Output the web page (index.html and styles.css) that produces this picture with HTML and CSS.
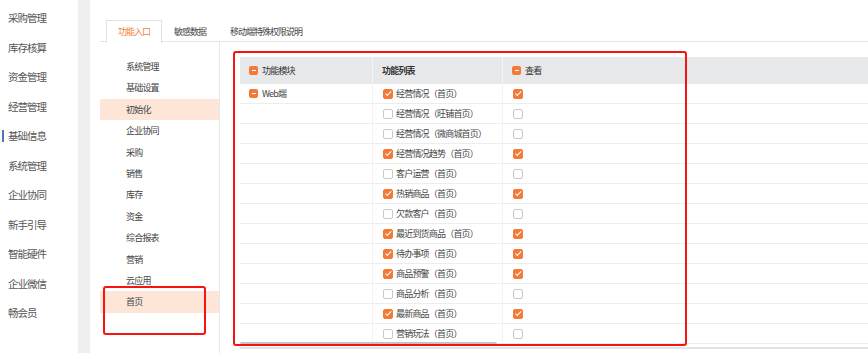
FILE: index.html
```html
<!DOCTYPE html>
<html lang="zh-CN">
<head>
  <meta charset="UTF-8">
  <title>功能入口权限</title>
  <link rel="stylesheet" href="styles.css">
</head>
<body>
  <div class="app">
    <!-- Main nav -->
    <ul class="nav">
      <li>采购管理</li>
      <li>库存核算</li>
      <li>资金管理</li>
      <li>经营管理</li>
      <li class="current">基础信息</li>
      <li>系统管理</li>
      <li>企业协同</li>
      <li>新手引导</li>
      <li>智能硬件</li>
      <li>企业微信</li>
      <li>畅会员</li>
    </ul>
    <div class="split"></div>

    <div class="main">
      <!-- Tabs -->
      <div class="tabs">
        <div class="tab active">功能入口</div>
        <div class="tab">敏感数据</div>
        <div class="tab">移动端特殊权限说明</div>
      </div>

      <div class="content">
        <!-- Module list -->
        <ul class="side">
          <li>系统管理</li>
          <li>基础设置</li>
          <li class="on">初始化</li>
          <li>企业协同</li>
          <li>采购</li>
          <li>销售</li>
          <li>库存</li>
          <li>资金</li>
          <li>综合报表</li>
          <li>营销</li>
          <li>云应用</li>
          <li class="on">首页</li>
        </ul>

        <!-- Permission table -->
        <div class="panel">
          <div class="row head">
            <div class="cell c1"><span class="minus"></span>功能模块</div>
            <div class="cell c2 bold">功能列表</div>
            <div class="cell c3"><span class="minus"></span>查看</div>
          </div>
          <div class="row">
            <div class="cell c1"><span class="minus"></span>Web端</div>
            <div class="cell c2"><span class="cb on"></span>经营情况（首页）</div>
            <div class="cell c3"><span class="cb on"></span></div>
          </div>
          <div class="row">
            <div class="cell c1"></div>
            <div class="cell c2"><span class="cb"></span>经营情况（旺铺首页）</div>
            <div class="cell c3"><span class="cb"></span></div>
          </div>
          <div class="row">
            <div class="cell c1"></div>
            <div class="cell c2"><span class="cb"></span>经营情况（微商城首页）</div>
            <div class="cell c3"><span class="cb"></span></div>
          </div>
          <div class="row">
            <div class="cell c1"></div>
            <div class="cell c2"><span class="cb on"></span>经营情况趋势（首页）</div>
            <div class="cell c3"><span class="cb on"></span></div>
          </div>
          <div class="row">
            <div class="cell c1"></div>
            <div class="cell c2"><span class="cb"></span>客户运营（首页）</div>
            <div class="cell c3"><span class="cb"></span></div>
          </div>
          <div class="row">
            <div class="cell c1"></div>
            <div class="cell c2"><span class="cb on"></span>热销商品（首页）</div>
            <div class="cell c3"><span class="cb on"></span></div>
          </div>
          <div class="row">
            <div class="cell c1"></div>
            <div class="cell c2"><span class="cb"></span>欠款客户（首页）</div>
            <div class="cell c3"><span class="cb"></span></div>
          </div>
          <div class="row">
            <div class="cell c1"></div>
            <div class="cell c2"><span class="cb on"></span>最近到货商品（首页）</div>
            <div class="cell c3"><span class="cb on"></span></div>
          </div>
          <div class="row">
            <div class="cell c1"></div>
            <div class="cell c2"><span class="cb on"></span>待办事项（首页）</div>
            <div class="cell c3"><span class="cb on"></span></div>
          </div>
          <div class="row">
            <div class="cell c1"></div>
            <div class="cell c2"><span class="cb on"></span>商品预警（首页）</div>
            <div class="cell c3"><span class="cb on"></span></div>
          </div>
          <div class="row">
            <div class="cell c1"></div>
            <div class="cell c2"><span class="cb"></span>商品分析（首页）</div>
            <div class="cell c3"><span class="cb"></span></div>
          </div>
          <div class="row">
            <div class="cell c1"></div>
            <div class="cell c2"><span class="cb on"></span>最新商品（首页）</div>
            <div class="cell c3"><span class="cb on"></span></div>
          </div>
          <div class="row">
            <div class="cell c1"></div>
            <div class="cell c2"><span class="cb"></span>营销玩法（首页）</div>
            <div class="cell c3"><span class="cb"></span></div>
          </div>
          <div class="thumb"></div>
        </div>
      </div>
    </div>
  </div>

  <!-- Annotation boxes -->
  <div class="mark mark-side"></div>
  <div class="mark mark-table"></div>
</body>
</html>
```

FILE: styles.css
```css
/* Reset */
body, html {
  margin: 0;
  padding: 0;
  background: #fff;
  font-family: "Noto Sans CJK SC", "Liberation Sans", sans-serif;
  color: #444;
}

ul {
  margin: 0;
  padding: 0;
  list-style: none;
}

.app {
  display: flex;
  width: 868px;
  height: 353px;
  overflow: hidden;
}

/* Main nav */
.nav {
  width: 78px;
  flex-shrink: 0;
  padding-top: 3px;
}

.nav li {
  position: relative;
  height: 29.5px;
  line-height: 29.5px;
  padding-left: 8px;
  font-size: 10.5px;
  letter-spacing: -1px;
  color: #555;
}

.nav li.current::before {
  content: "";
  position: absolute;
  left: 2px;
  top: 9px;
  width: 2px;
  height: 12px;
  background: #4a78b8;
}

.split {
  width: 12px;
  flex-shrink: 0;
  background: #efefef;
}

/* Tabs */
.main {
  flex: 1;
  display: flex;
  flex-direction: column;
  padding: 20px 0 0 10px;
  min-width: 0;
}

.tabs {
  display: flex;
  align-items: flex-start;
  height: 21px;
  padding-left: 6px;
  border-bottom: 1px solid #e6e6e6;
}

.tab {
  height: 21px;
  line-height: 21px;
  padding: 0 11px;
  border: 1px solid transparent;
  border-bottom: none;
  font-size: 9px;
  letter-spacing: -1px;
  color: #444;
}

.tab.active {
  height: 22px;
  border-color: #e2e2e2;
  background: #fff;
  color: #f0803c;
}

/* Content */
.content {
  flex: 1;
  display: flex;
}

.side {
  width: 119px;
  flex-shrink: 0;
  padding-top: 14px;
  border-right: 1px solid #e8e8e8;
}

.side li {
  height: 21.4px;
  line-height: 21.4px;
  padding-left: 26px;
  font-size: 9px;
  letter-spacing: -0.8px;
  color: #444;
}

.side li.on {
  background: #fde5d8;
}

/* Table */
.panel {
  position: relative;
  flex: 1;
  height: 290px;
  margin: 15px 0 0 20px;
  overflow: hidden;
  border-bottom: 2px solid #e4e4e4;
}

.row {
  display: flex;
  height: 19px;
  border-bottom: 1px solid #ededed;
  font-size: 9px;
  letter-spacing: -0.8px;
  color: #444;
}

.row.head {
  height: 27px;
  border-bottom: none;
  background: #e7e8ea;
  color: #333;
}

.cell {
  display: flex;
  align-items: center;
  padding-left: 9px;
  box-sizing: border-box;
  white-space: nowrap;
}

.c1 { width: 133px; border-right: 1px solid #f2f2f2; }
.c2 { width: 130px; border-right: 1px solid #f2f2f2; }
.c3 { flex: 1; padding-left: 9px; }

.head .cell { border-right-color: #f3f4f5; }
.head .bold { font-weight: 700; }

.minus {
  position: relative;
  width: 9px;
  height: 9px;
  margin-right: 4px;
  border-radius: 2px;
  background: #f47a3a;
  flex-shrink: 0;
}

.minus::after {
  content: "";
  position: absolute;
  left: 2.5px;
  top: 3.8px;
  width: 4px;
  height: 1.4px;
  background: #fff;
}

.cb {
  position: relative;
  width: 10px;
  height: 10px;
  margin: 0 3px 0 1px;
  box-sizing: border-box;
  border: 1px solid #c9c9c9;
  border-radius: 2px;
  background: #fff;
  flex-shrink: 0;
}

.cb.on {
  border-color: #f47a3a;
  background: #f47a3a;
}

.cb.on::after {
  content: "";
  position: absolute;
  left: 2.6px;
  top: 0.6px;
  width: 2.2px;
  height: 4.6px;
  border: solid #fff;
  border-width: 0 1.3px 1.3px 0;
  transform: rotate(45deg);
}

.thumb {
  position: absolute;
  left: 0;
  bottom: 1px;
  width: 257px;
  height: 4px;
  border-radius: 2px;
  background: #c3c3c3;
}

/* Annotation boxes */
.mark {
  position: absolute;
  border: 2px solid #f5140f;
  border-radius: 3px;
}

.mark-side {
  left: 103px;
  top: 286px;
  width: 99px;
  height: 45px;
}

.mark-table {
  left: 233px;
  top: 51px;
  width: 450px;
  height: 291px;
}
```
